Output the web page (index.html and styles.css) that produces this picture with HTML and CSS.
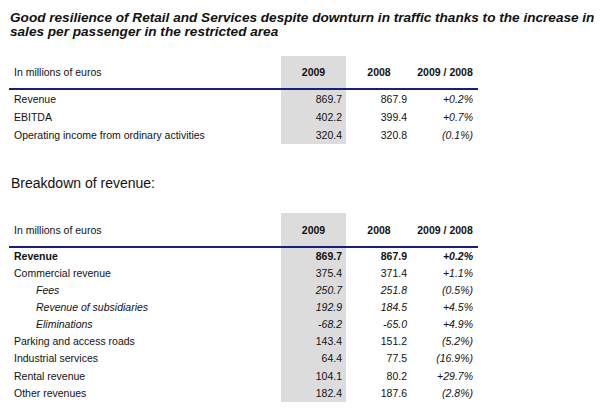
FILE: index.html
```html
<!DOCTYPE html>
<html>
<head>
<meta charset="utf-8">
<link rel="stylesheet" href="styles.css">
</head>
<body>
<h1 class="title">Good resilience of Retail and Services despite downturn in traffic thanks to the increase in sales per passenger in the restricted area</h1>

<table class="fin fin-1">
  <colgroup><col class="c-label"><col class="c-y1"><col class="c-y2"><col class="c-ch"></colgroup>
  <thead>
    <tr><th class="lbl">In millions of euros</th><th class="hl">2009</th><th>2008</th><th>2009 / 2008</th></tr>
  </thead>
  <tbody>
    <tr><td class="lbl">Revenue</td><td class="hl">869.7</td><td>867.9</td><td class="it">+0.2%</td></tr>
    <tr><td class="lbl">EBITDA</td><td class="hl">402.2</td><td>399.4</td><td class="it">+0.7%</td></tr>
    <tr><td class="lbl">Operating income from ordinary activities</td><td class="hl">320.4</td><td>320.8</td><td class="it">(0.1%)</td></tr>
  </tbody>
</table>

<p class="subhead">Breakdown of revenue:</p>

<table class="fin fin-2">
  <colgroup><col class="c-label"><col class="c-y1"><col class="c-y2"><col class="c-ch"></colgroup>
  <thead>
    <tr><th class="lbl">In millions of euros</th><th class="hl">2009</th><th>2008</th><th>2009 / 2008</th></tr>
  </thead>
  <tbody>
    <tr class="bold"><td class="lbl">Revenue</td><td class="hl">869.7</td><td>867.9</td><td class="it">+0.2%</td></tr>
    <tr><td class="lbl">Commercial revenue</td><td class="hl">375.4</td><td>371.4</td><td class="it">+1.1%</td></tr>
    <tr class="sub"><td class="lbl">Fees</td><td class="hl">250.7</td><td>251.8</td><td>(0.5%)</td></tr>
    <tr class="sub"><td class="lbl">Revenue of subsidiaries</td><td class="hl">192.9</td><td>184.5</td><td>+4.5%</td></tr>
    <tr class="sub"><td class="lbl">Eliminations</td><td class="hl">-68.2</td><td>-65.0</td><td>+4.9%</td></tr>
    <tr><td class="lbl">Parking and access roads</td><td class="hl">143.4</td><td>151.2</td><td class="it">(5.2%)</td></tr>
    <tr><td class="lbl">Industrial services</td><td class="hl">64.4</td><td>77.5</td><td class="it">(16.9%)</td></tr>
    <tr><td class="lbl">Rental revenue</td><td class="hl">104.1</td><td>80.2</td><td class="it">+29.7%</td></tr>
    <tr><td class="lbl">Other revenues</td><td class="hl">182.4</td><td>187.6</td><td class="it">(2.8%)</td></tr>
  </tbody>
</table>
</body>
</html>
```

FILE: styles.css
```css
html, body {
  margin: 0;
  padding: 0;
  background: #ffffff;
}

body {
  font-family: "Liberation Sans", Arial, sans-serif;
  color: #111111;
  padding: 11px 0 0 10px;
}

.title {
  margin: 0;
  font-size: 13.6px;
  line-height: 14px;
  font-weight: bold;
  font-style: italic;
  width: 590px;
}

.fin {
  border-collapse: collapse;
  table-layout: fixed;
  width: 469px;
  margin-left: -1px;
  font-size: 10.5px;
}

.fin-1 {
  margin-top: 17px;
}

.fin-2 {
  margin-top: 0;
}

.c-label { width: 272px; }
.c-y1 { width: 65px; }
.c-y2 { width: 66px; }
.c-ch { width: 66px; }

.fin th {
  height: 32px;
  padding: 0;
  font-weight: bold;
  text-align: center;
  border-bottom: 2px solid #1c1c86;
  vertical-align: middle;
}

.fin-2 th {
  height: 33px;
}

.fin th.lbl {
  font-weight: normal;
  text-align: left;
  padding-left: 5px;
}

.fin-1 td {
  height: 18px;
}

.fin-2 td {
  height: 17px;
}

.fin-2 tbody tr:nth-child(n+6) td {
  height: 17.3px;
}

.fin td {
  padding: 0 5px 0 0;
  text-align: right;
  vertical-align: middle;
  line-height: 13px;
}

.fin td.lbl {
  text-align: left;
  padding: 0 0 0 5px;
}

.fin td.hl {
  padding-right: 4px;
}

.hl {
  background: #dcdcdc;
}

.it {
  font-style: italic;
}

.bold td {
  font-weight: bold;
}

.sub td {
  font-style: italic;
}

.sub td.lbl {
  padding-left: 27px;
}

.subhead {
  margin: 31px 0 0 1px;
  font-size: 14px;
  line-height: 16px;
  height: 38px;
}
```
